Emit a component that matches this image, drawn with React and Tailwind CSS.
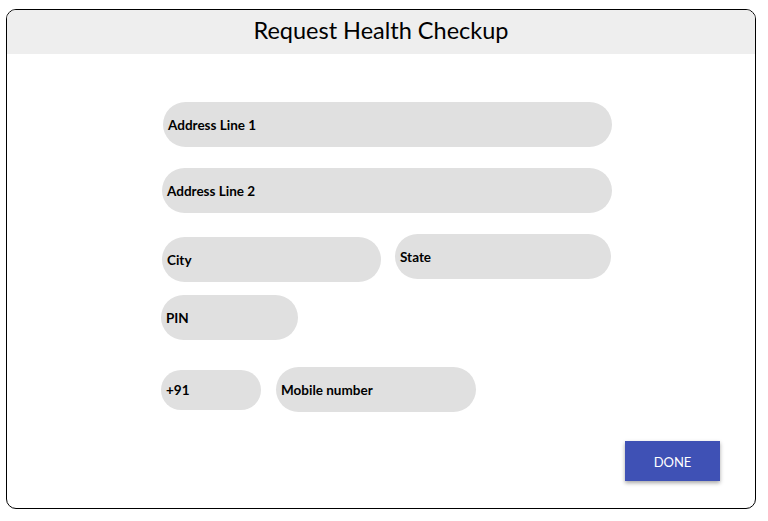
export default function App() {
  const f = "font-['Lato',sans-serif]";
  const field = "bg-[#e0e0e0] rounded-full flex items-center pl-[5px] pt-[2px] text-[13.5px] font-bold text-black";
  return (
    <div className={`w-[768px] h-[521px] bg-white pt-[9px] pl-[6px] ${f}`}>
      <div className="w-[750px] h-[500px] border border-black rounded-[10px] overflow-hidden flex flex-col">
        <div className="h-[44px] bg-[#eeeeee] flex items-center justify-center pb-[2px] text-[23.5px] text-black">
          Request Health Checkup
        </div>
        <div className="flex flex-col pl-[155px]">
          <div className={`${field} mt-[48px] ml-[1px] w-[449px] h-[45px]`}>Address Line 1</div>
          <div className={`${field} mt-[21px] w-[450px] h-[45px]`}>Address Line 2</div>
          <div className="flex items-start mt-[21px]">
            <div className={`${field} mt-[3px] w-[219px] h-[45px]`}>City</div>
            <div className={`${field} ml-[14px] w-[216px] h-[45px]`}>State</div>
          </div>
          <div className={`${field} mt-[13px] -ml-[1px] w-[137px] h-[45px]`}>PIN</div>
          <div className="flex items-center mt-[27px] -ml-[1px]">
            <div className={`${field} w-[100px] h-[40px]`}>+91</div>
            <div className={`${field} ml-[15px] w-[200px] h-[45px]`}>Mobile number</div>
          </div>
        </div>
        <div className="flex justify-end pr-[35px] mt-[29px]">
          <button className="w-[95px] h-[40px] pt-[3px] bg-[#3f51b5] text-white text-[13px] shadow-[0_2px_4px_rgba(0,0,0,0.35)]">
            DONE
          </button>
        </div>
      </div>
    </div>
  );
}
